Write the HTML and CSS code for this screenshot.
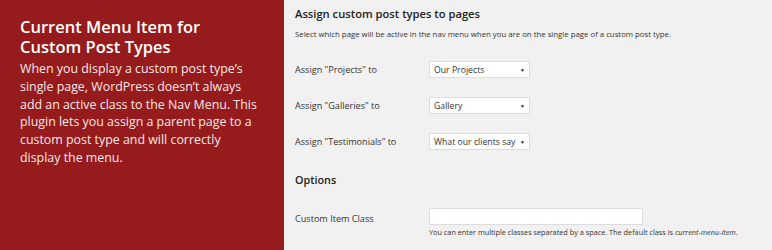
FILE: index.html
```html
<!DOCTYPE html>
<html lang="en">
<head>
    <meta charset="UTF-8">
    <meta name="viewport" content="width=device-width, initial-scale=1.0">
    <title>Current Menu Item for Custom Post Types</title>
    <link rel="stylesheet" href="styles.css">
</head>
<body>
    <div class="banner">
        <div class="intro">
            <h1>Current Menu Item for Custom Post Types</h1>
            <p>When you display a custom post type’s single page, WordPress doesn’t always add an active class to the Nav Menu. This plugin lets you assign a parent page to a custom post type and will correctly display the menu.</p>
        </div>
        <div class="settings">
            <h2>Assign custom post types to pages</h2>
            <p class="desc">Select which page will be active in the nav menu when you are on the single page of a custom post type.</p>

            <div class="row first">
                <label>Assign "Projects" to</label>
                <div class="select">Our Projects<span class="arrow">▼</span></div>
            </div>
            <div class="row">
                <label>Assign "Galleries" to</label>
                <div class="select">Gallery<span class="arrow">▼</span></div>
            </div>
            <div class="row">
                <label>Assign "Testimonials" to</label>
                <div class="select">What our clients say<span class="arrow">▼</span></div>
            </div>

            <h3>Options</h3>

            <div class="row custom">
                <label>Custom Item Class</label>
                <div class="field">
                    <div class="text-input"></div>
                    <p class="help">You can enter multiple classes separated by a space. The default class is <em>current-menu-item</em>.</p>
                </div>
            </div>
        </div>
    </div>
</body>
</html>
```

FILE: styles.css
```css
body {
    margin: 0;
    font-family: "Open Sans", "Liberation Sans", sans-serif;
    background-color: #f1f1f1;
    color: #222;
}
.banner {
    display: flex;
    width: 772px;
    height: 250px;
}
.intro {
    width: 284px;
    flex-shrink: 0;
    background-color: #951b1c;
    color: #fff;
    padding: 17px 20px 0 20px;
    box-sizing: border-box;
}
.intro h1 {
    margin: 0;
    font-size: 16.5px;
    line-height: 20px;
    font-weight: 600;
}
.intro p {
    margin: 3px 0 0;
    font-size: 12.4px;
    line-height: 17.8px;
    color: #f6e8e8;
}
.settings {
    flex: 1;
    padding: 6px 0 0 11px;
}
.settings h2 {
    margin: 0;
    font-size: 11.2px;
    line-height: 16px;
    font-weight: 600;
}
.desc {
    margin: 7px 0 0;
    font-size: 7.8px;
    line-height: 10px;
    color: #333;
}
.row {
    display: flex;
    align-items: center;
    margin-top: 19px;
}
.row.first {
    margin-top: 22px;
}
.row label {
    width: 134px;
    flex-shrink: 0;
    font-size: 9.1px;
    color: #333;
}
.select {
    display: flex;
    align-items: center;
    justify-content: space-between;
    width: 101px;
    height: 17px;
    padding: 0 4px;
    box-sizing: border-box;
    background-color: #fff;
    border: 1px solid #ddd;
    font-size: 8.7px;
    color: #333;
}
.arrow {
    font-size: 5px;
    color: #222;
}
.settings h3 {
    margin: 23px 0 0;
    font-size: 10.8px;
    line-height: 14px;
    font-weight: 600;
}
.row.custom {
    align-items: flex-start;
    margin-top: 21px;
}
.row.custom label {
    margin-top: 4px;
}
.text-input {
    width: 214px;
    height: 17px;
    box-sizing: border-box;
    background-color: #fff;
    border: 1px solid #ddd;
}
.help {
    margin: 2px 0 0;
    font-size: 7.3px;
    line-height: 10px;
    color: #333;
}
```
